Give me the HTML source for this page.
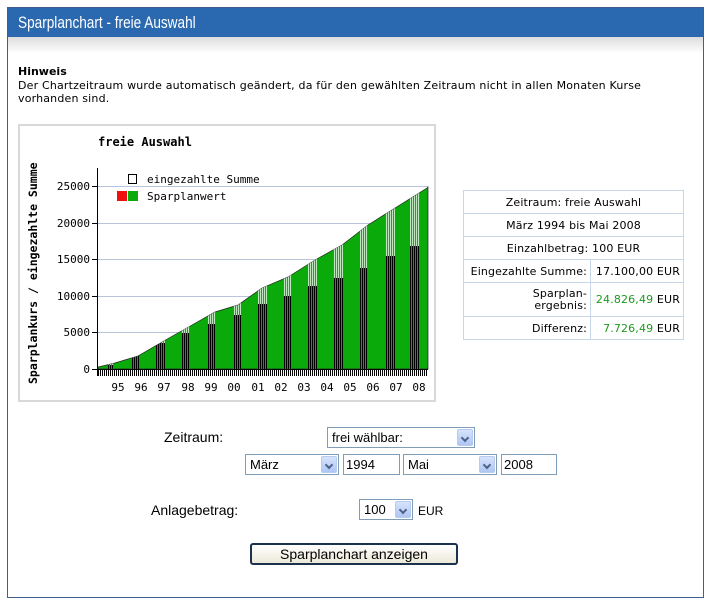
<!DOCTYPE html>
<html><head><meta charset="utf-8"><style>
*{margin:0;padding:0;box-sizing:border-box}
body{width:710px;height:604px;background:#fff;position:relative;font-family:"DejaVu Sans","Liberation Sans",sans-serif;font-size:11px;color:#000;overflow:hidden}
.a{position:absolute}
#frame{left:7px;top:7px;width:697px;height:591px;border:1px solid #3f5f8f}
#hdr{left:8px;top:8px;width:695px;height:29px;background:#2a68b0;color:#fff;font-family:"Liberation Sans",sans-serif;font-size:17px;line-height:29px;padding-left:10px}
#hdr span{display:inline-block;transform:scaleX(0.8);transform-origin:left center}
#shade{left:8px;top:37px;width:695px;height:16px;background:linear-gradient(#dcdcdc,#fff)}
.sel{position:absolute;border:1px solid #7f9db9;background:#fff;font-family:"Liberation Sans",sans-serif;font-size:13px;line-height:19px;padding-left:4px;height:21px}
.sel i{position:absolute;right:1px;top:1px;width:16px;height:17px;background:linear-gradient(#d6e3fb,#aec6f4);border:1px solid #b7cbf0;border-radius:2px}
.sel i:after{content:"";position:absolute;left:4px;top:5px;width:4px;height:4px;border-right:2px solid #4d6185;border-bottom:2px solid #4d6185;transform:rotate(45deg)}
.inp{position:absolute;border:1px solid #7f9db9;background:#fff;font-family:"Liberation Sans",sans-serif;font-size:13px;line-height:19px;padding-left:2px;height:21px}
.lbl{position:absolute;font-family:"Liberation Sans",sans-serif;font-size:14px}
table{position:absolute;left:463px;top:190px;width:221px;border-collapse:collapse;font-size:11px;letter-spacing:0.15px}
td{border:1px solid #c8d6ea;height:23px;padding:0 3px}
.g{color:#1d9a1d}
</style></head><body>
<div class="a" id="frame"></div>
<div class="a" id="hdr"><span>Sparplanchart - freie Auswahl</span></div>
<div class="a" id="shade"></div>
<div class="a" style="left:18px;top:65px;font-weight:bold">Hinweis</div>
<div class="a" style="left:18px;top:79px;width:670px;line-height:13px;letter-spacing:0.18px">Der Chartzeitraum wurde automatisch geändert, da für den gewählten Zeitraum nicht in allen Monaten Kurse vorhanden sind.</div>

<svg class="a" style="left:18px;top:124px" width="418" height="278" viewBox="18 124 418 278">
<defs>
<pattern id="dk" width="2" height="4" patternUnits="userSpaceOnUse"><rect width="1" height="4" fill="#000"/><rect x="1" width="1" height="4" fill="#13a013"/></pattern>
<pattern id="lt" width="2" height="4" patternUnits="userSpaceOnUse"><rect width="1" height="4" fill="#bfe6bf"/><rect x="1" width="1" height="4" fill="#19a819"/></pattern>
<pattern id="tk" width="2" height="7" patternUnits="userSpaceOnUse"><rect width="1" height="7" fill="#000"/></pattern>
<clipPath id="cp"><polygon points="98,369 98,367 115,363 138,356 162,342 192,325 215,312 238,305 262,288 288,277 315,260 342,245 368,225 395,208 427,188 428,187 428,369"/></clipPath>
</defs>
<rect x="19" y="125" width="416" height="276" fill="#fff" stroke="#d8d8d8" stroke-width="2"/>
<g stroke="#b8c4dc" stroke-width="1">
<line x1="97" y1="186.5" x2="428" y2="186.5"/><line x1="97" y1="223.5" x2="428" y2="223.5"/><line x1="97" y1="259.5" x2="428" y2="259.5"/><line x1="97" y1="296.5" x2="428" y2="296.5"/><line x1="97" y1="332.5" x2="428" y2="332.5"/>
</g>
<polygon points="98,369 98,367 115,363 138,356 162,342 192,325 215,312 238,305 262,288 288,277 315,260 342,245 368,225 395,208 427,188 428,187 428,369" fill="#0aaa0a" stroke="#222" stroke-width="0.7"/>
<g clip-path="url(#cp)">
<rect x="108" y="180" width="6" height="189" fill="url(#lt)"/><rect x="108" y="365" width="6" height="4" fill="url(#dk)"/>
<rect x="131" y="180" width="8" height="189" fill="url(#lt)"/><rect x="131" y="353" width="8" height="16" fill="url(#dk)"/>
<rect x="156" y="180" width="9" height="189" fill="url(#lt)"/><rect x="156" y="343" width="9" height="26" fill="url(#dk)"/>
<rect x="181" y="180" width="9" height="189" fill="url(#lt)"/><rect x="181" y="333" width="9" height="36" fill="url(#dk)"/>
<rect x="208" y="180" width="8" height="189" fill="url(#lt)"/><rect x="208" y="324" width="8" height="45" fill="url(#dk)"/>
<rect x="233" y="180" width="8" height="189" fill="url(#lt)"/><rect x="233" y="315" width="8" height="54" fill="url(#dk)"/>
<rect x="258" y="180" width="9" height="189" fill="url(#lt)"/><rect x="258" y="304" width="9" height="65" fill="url(#dk)"/>
<rect x="283" y="180" width="9" height="189" fill="url(#lt)"/><rect x="283" y="296" width="9" height="73" fill="url(#dk)"/>
<rect x="308" y="180" width="9" height="189" fill="url(#lt)"/><rect x="308" y="286" width="9" height="83" fill="url(#dk)"/>
<rect x="333" y="180" width="10" height="189" fill="url(#lt)"/><rect x="333" y="278" width="10" height="91" fill="url(#dk)"/>
<rect x="360" y="180" width="8" height="189" fill="url(#lt)"/><rect x="360" y="268" width="8" height="101" fill="url(#dk)"/>
<rect x="385" y="180" width="10" height="189" fill="url(#lt)"/><rect x="385" y="256" width="10" height="113" fill="url(#dk)"/>
<rect x="410" y="180" width="10" height="189" fill="url(#lt)"/><rect x="410" y="246" width="10" height="123" fill="url(#dk)"/>
</g>
<line x1="97.5" y1="168" x2="97.5" y2="376" stroke="#000"/>
<line x1="92" y1="369.5" x2="428" y2="369.5" stroke="#000"/>
<g stroke="#000"><line x1="92" y1="186.5" x2="97" y2="186.5"/><line x1="92" y1="223.5" x2="97" y2="223.5"/><line x1="92" y1="259.5" x2="97" y2="259.5"/><line x1="92" y1="296.5" x2="97" y2="296.5"/><line x1="92" y1="332.5" x2="97" y2="332.5"/></g>
<rect x="98" y="370" width="330" height="6" fill="url(#tk)"/>
<g font-family="DejaVu Sans Mono,Liberation Mono,monospace" font-size="11" text-anchor="end">
<text x="90" y="190">25000</text><text x="90" y="227">20000</text><text x="90" y="263">15000</text><text x="90" y="300">10000</text><text x="90" y="336">5000</text><text x="90" y="373">0</text>
</g>
<g font-family="DejaVu Sans Mono,Liberation Mono,monospace" font-size="11" text-anchor="middle">
<text x="118" y="391">95</text><text x="141" y="391">96</text><text x="164" y="391">97</text><text x="188" y="391">98</text><text x="211" y="391">99</text><text x="234" y="391">00</text><text x="258" y="391">01</text><text x="281" y="391">02</text><text x="304" y="391">03</text><text x="327" y="391">04</text><text x="350" y="391">05</text><text x="373" y="391">06</text><text x="396" y="391">07</text><text x="419" y="391">08</text>
</g>
<text x="98" y="146" font-family="DejaVu Sans Mono,Liberation Mono,monospace" font-size="12" font-weight="bold">freie Auswahl</text>
<text transform="translate(37,384) rotate(-90)" font-family="DejaVu Sans Mono,Liberation Mono,monospace" font-size="11.5" font-weight="bold">Sparplankurs / eingezahlte Summe</text>
<rect x="128.5" y="174.5" width="8" height="9" fill="#fff" stroke="#000"/>
<rect x="117" y="191" width="10" height="10" fill="#f01010"/><rect x="128" y="191" width="10" height="10" fill="#0aaa0a"/>
<g font-family="DejaVu Sans Mono,Liberation Mono,monospace" font-size="11"><text x="147" y="183">eingezahlte Summe</text><text x="147" y="200">Sparplanwert</text></g>
</svg>

<table>
<tr><td colspan="2" align="center">Zeitraum: freie Auswahl</td></tr>
<tr><td colspan="2" align="center">März 1994 bis Mai 2008</td></tr>
<tr><td colspan="2" align="center">Einzahlbetrag: 100 EUR</td></tr>
<tr><td align="right" style="width:127px">Eingezahlte Summe:</td><td align="right">17.100,00 EUR</td></tr>
<tr><td align="right" style="height:34px;line-height:12px">Sparplan-<br>ergebnis:</td><td align="right"><span class="g">24.826,49</span> EUR</td></tr>
<tr><td align="right">Differenz:</td><td align="right"><span class="g">7.726,49</span> EUR</td></tr>
</table>

<div class="lbl" style="left:164px;top:429px">Zeitraum:</div>
<div class="sel" style="left:327px;top:427px;width:148px">frei wählbar:<i></i></div>
<div class="sel" style="left:245px;top:454px;width:94px">März<i></i></div>
<div class="inp" style="left:343px;top:454px;width:57px">1994</div>
<div class="sel" style="left:403px;top:454px;width:94px">Mai<i></i></div>
<div class="inp" style="left:501px;top:454px;width:56px">2008</div>
<div class="lbl" style="left:151px;top:502px">Anlagebetrag:</div>
<div class="sel" style="left:359px;top:499px;width:54px">100<i></i></div>
<div class="lbl" style="left:418px;top:504px;font-size:12px">EUR</div>
<div class="a" style="left:250px;top:543px;width:208px;height:22px;border:2px solid #1c3150;border-radius:3px;background:linear-gradient(#fff,#ece9d8);font-family:'Liberation Sans',sans-serif;font-size:14px;text-align:center;line-height:18px">Sparplanchart anzeigen</div>
</body></html>
